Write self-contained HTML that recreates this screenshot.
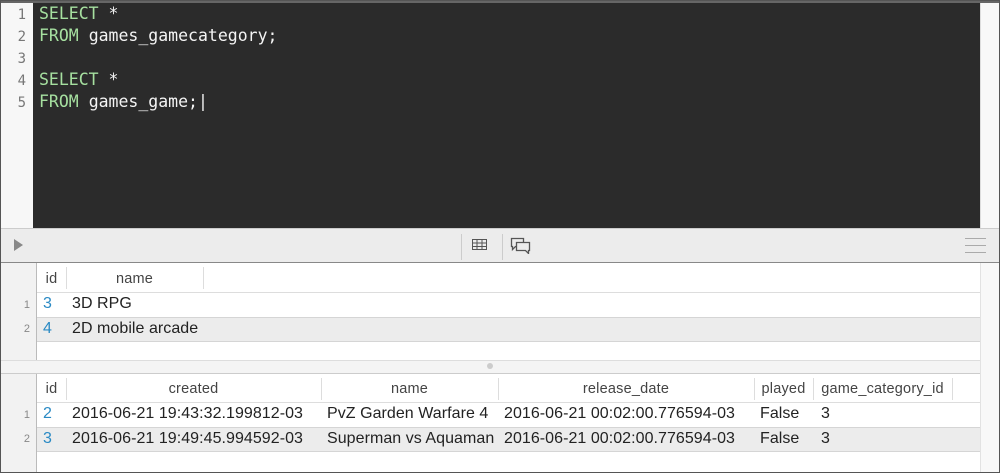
<!DOCTYPE html>
<html><head><style>
*{margin:0;padding:0;box-sizing:border-box}
body{width:1000px;height:473px;overflow:hidden;background:#fff;font-family:"Liberation Sans",sans-serif;position:relative}
.a{position:absolute}
.code{font-family:"DejaVu Sans Mono","Liberation Mono",monospace;font-size:16.5px;line-height:22px}
.ln{color:#777;font-family:"DejaVu Sans Mono",monospace;font-size:14px;line-height:22px;text-align:right;width:26px}
.k{color:#a6e0a0}.w{color:#f4f4f4}
.t{font-size:16px;letter-spacing:0.05px;color:#222;white-space:nowrap}
.h{font-size:14.5px;letter-spacing:0.2px;color:#444;text-align:center;white-space:nowrap}
.b{color:#2a8ac4}
.rn{font-size:11px;color:#888;text-align:right;width:30px}
.vl{position:absolute;width:1px;background:#ddd}
</style></head><body>
<div class="a" style="left:0;top:0;width:1000px;height:473px;border:1px solid #555;z-index:9"></div>
<div class="a" style="left:0;top:0;width:33px;height:228px;background:#f7f7f7"></div>
<div class="a" style="left:33px;top:2px;width:947px;height:226px;background:#2b2b2b"></div>
<div class="a" style="left:980px;top:2px;width:20px;height:226px;background:#f8f8f8;border-left:1px solid #ddd"></div>
<div class="a" style="left:0;top:0;width:1000px;height:3px;background:#666"></div>
<div class="a ln" style="left:0;top:4px">1<br>2<br>3<br>4<br>5</div>
<div class="a code" style="left:39px;top:3px;line-height:22px;white-space:pre"><span class="k">SELECT</span> <span class="w">*</span>
<span class="k">FROM</span> <span class="w">games_gamecategory;</span>

<span class="k">SELECT</span> <span class="w">*</span>
<span class="k">FROM</span> <span class="w">games_game;</span><span style="color:#eee">|</span></div>
<div class="a" style="left:0;top:228px;width:1000px;height:35px;background:#ececec;border-top:1px solid #ccc;border-bottom:1px solid #888"></div>
<div class="a" style="left:14px;top:239px;width:0;height:0;border-left:9px solid #888;border-top:6px solid transparent;border-bottom:6px solid transparent"></div>
<div class="vl" style="left:461px;top:234px;height:26px;background:#ccc"></div>
<div class="vl" style="left:502px;top:234px;height:26px;background:#ccc"></div>
<svg class="a" style="left:472px;top:239px" width="16" height="12"><rect x="0.5" y="0.5" width="14" height="10" fill="none" stroke="#555"/><path d="M0 4h15M0 7.5h15M5 0v11M10 0v11" stroke="#555"/></svg>
<svg class="a" style="left:510px;top:236px" width="22" height="18"><path d="M1.5 2.5h12v8h-8l-3 3v-3h-1z" fill="#ececec" stroke="#555" stroke-width="1.3"/><path d="M6.5 6.5h13v8h-1v3l-3-3h-9z" fill="#ececec" stroke="#555" stroke-width="1.3"/></svg>
<div class="a" style="left:965px;top:238px;width:21px;height:1px;background:#aaa"></div>
<div class="a" style="left:965px;top:245px;width:21px;height:1px;background:#aaa"></div>
<div class="a" style="left:965px;top:252px;width:21px;height:1px;background:#aaa"></div>
<div class="a" style="left:0;top:263px;width:37px;height:97px;background:#f2f2f2;border-right:1px solid #bbb"></div>
<div class="a" style="left:980px;top:263px;width:20px;height:210px;background:#f8f8f8;border-left:1px solid #e2e2e2"></div>
<div class="a" style="left:37px;top:292px;width:943px;height:1px;background:#ddd"></div>
<div class="a" style="left:37px;top:317px;width:943px;height:25px;background:#ececec;border-top:1px solid #d5d5d5;border-bottom:1px solid #d5d5d5"></div>
<div class="vl" style="left:66px;top:267px;height:22px"></div>
<div class="vl" style="left:203px;top:267px;height:22px"></div>
<div class="a h" style="left:37px;top:271px;width:29px">id</div>
<div class="a h" style="left:66px;top:271px;width:137px">name</div>
<div class="a rn" style="left:0;top:299px">1</div>
<div class="a rn" style="left:0;top:323px">2</div>
<div class="a t b" style="left:43px;top:295px">3</div>
<div class="a t" style="left:72px;top:295px">3D RPG</div>
<div class="a t b" style="left:43px;top:320px">4</div>
<div class="a t" style="left:72px;top:320px">2D mobile arcade</div>
<div class="a" style="left:0;top:360px;width:980px;height:14px;background:#f4f4f4;border-top:1px solid #ddd;border-bottom:1px solid #ccc"></div>
<div class="a" style="left:487px;top:363px;width:6px;height:6px;border-radius:50%;background:#ccc"></div>
<div class="a" style="left:0;top:374px;width:37px;height:99px;background:#f2f2f2;border-right:1px solid #bbb"></div>
<div class="a" style="left:37px;top:402px;width:943px;height:1px;background:#ddd"></div>
<div class="a" style="left:37px;top:427px;width:943px;height:25px;background:#ececec;border-top:1px solid #d5d5d5;border-bottom:1px solid #d5d5d5"></div>
<div class="vl" style="left:66px;top:378px;height:22px"></div>
<div class="vl" style="left:321px;top:378px;height:22px"></div>
<div class="vl" style="left:498px;top:378px;height:22px"></div>
<div class="vl" style="left:754px;top:378px;height:22px"></div>
<div class="vl" style="left:813px;top:378px;height:22px"></div>
<div class="vl" style="left:952px;top:378px;height:22px"></div>
<div class="a h" style="left:37px;top:381px;width:29px">id</div>
<div class="a h" style="left:66px;top:381px;width:255px">created</div>
<div class="a h" style="left:321px;top:381px;width:177px">name</div>
<div class="a h" style="left:498px;top:381px;width:256px">release_date</div>
<div class="a h" style="left:754px;top:381px;width:59px">played</div>
<div class="a h" style="left:813px;top:381px;width:139px">game_category_id</div>
<div class="a rn" style="left:0;top:409px">1</div>
<div class="a rn" style="left:0;top:433px">2</div>
<div class="a t b" style="left:43px;top:405px">2</div>
<div class="a t" style="left:72px;top:405px">2016-06-21 19:43:32.199812-03</div>
<div class="a t" style="left:327px;top:405px">PvZ Garden Warfare 4</div>
<div class="a t" style="left:504px;top:405px">2016-06-21 00:02:00.776594-03</div>
<div class="a t" style="left:760px;top:405px">False</div>
<div class="a t" style="left:821px;top:405px">3</div>
<div class="a t b" style="left:43px;top:430px">3</div>
<div class="a t" style="left:72px;top:430px">2016-06-21 19:49:45.994592-03</div>
<div class="a t" style="left:327px;top:430px">Superman vs Aquaman</div>
<div class="a t" style="left:504px;top:430px">2016-06-21 00:02:00.776594-03</div>
<div class="a t" style="left:760px;top:430px">False</div>
<div class="a t" style="left:821px;top:430px">3</div>
</body></html>
